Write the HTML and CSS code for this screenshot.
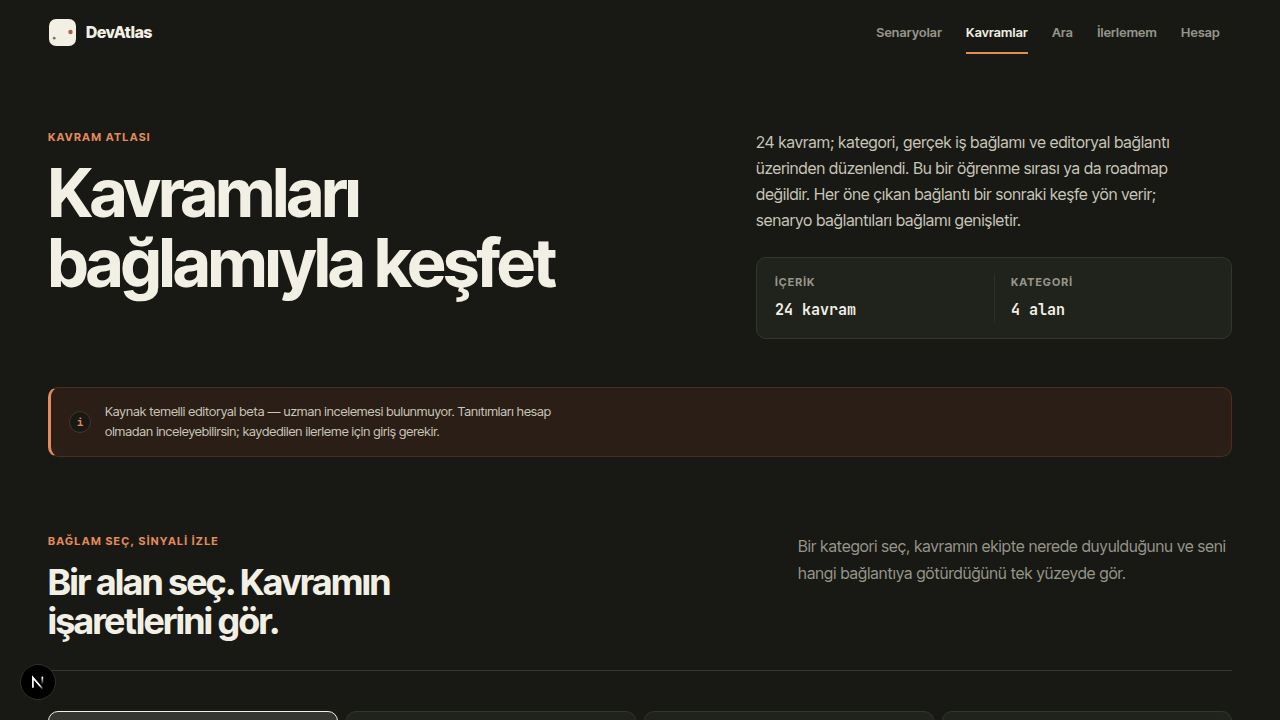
FILE: index.html
```html
<!DOCTYPE html>
<html lang="tr">
<head>
  <meta charset="utf-8">
  <meta name="viewport" content="width=device-width, initial-scale=1">
  <title>DevAtlas</title>
  <link rel="stylesheet" href="styles.css">
</head>
<body>
  <header class="site-header">
    <a class="brand" href="#">
      <svg class="brand-mark" viewBox="0 0 28 28" aria-hidden="true">
        <rect x="1" y="1" width="27" height="27" rx="7" fill="#f2efe4"/>
        <circle cx="22.5" cy="14" r="2.2" fill="#a9613f"/>
        <circle cx="6.2" cy="20.2" r="1.4" fill="#77776c"/>
      </svg>
      <span>DevAtlas</span>
    </a>
    <nav class="main-nav">
      <a href="#">Senaryolar</a>
      <a href="#" class="active" aria-current="page">Kavramlar</a>
      <a href="#">Ara</a>
      <a href="#">İlerlemem</a>
      <a href="#">Hesap</a>
    </nav>
  </header>

  <main class="page">
    <section class="hero">
      <div>
        <p class="eyebrow">KAVRAM ATLASI</p>
        <h1>Kavramları bağlamıyla keşfet</h1>
      </div>
      <div class="hero-side">
        <p class="lead">24 kavram; kategori, gerçek iş bağlamı ve editoryal bağlantı üzerinden düzenlendi. Bu bir öğrenme sırası ya da roadmap değildir. Her öne çıkan bağlantı bir sonraki keşfe yön verir; senaryo bağlantıları bağlamı genişletir.</p>
        <dl class="stats">
          <div class="stat">
            <dt>İÇERİK</dt>
            <dd>24 kavram</dd>
          </div>
          <div class="stat">
            <dt>KATEGORİ</dt>
            <dd>4 alan</dd>
          </div>
        </dl>
      </div>
    </section>

    <aside class="notice">
      <span class="notice-icon">i</span>
      <p>Kaynak temelli editoryal beta — uzman incelemesi bulunmuyor. Tanıtımları hesap olmadan inceleyebilirsin; kaydedilen ilerleme için giriş gerekir.</p>
    </aside>

    <section class="explorer">
      <div class="explorer-head">
        <div>
          <p class="eyebrow">BAĞLAM SEÇ, SİNYALİ İZLE</p>
          <h2>Bir alan seç. Kavramın işaretlerini gör.</h2>
        </div>
        <p class="explorer-intro">Bir kategori seç, kavramın ekipte nerede duyulduğunu ve seni hangi bağlantıya götürdüğünü tek yüzeyde gör.</p>
      </div>
      <div class="tabs">
        <button type="button" class="tab selected"></button>
        <button type="button" class="tab"></button>
        <button type="button" class="tab"></button>
        <button type="button" class="tab"></button>
      </div>
    </section>
  </main>

  <!-- Floating dev tools button -->
  <button type="button" class="dev-button">
    <svg viewBox="0 0 36 36" aria-hidden="true">
      <defs>
        <linearGradient id="diagonal" gradientUnits="userSpaceOnUse" x1="18" y1="18" x2="24" y2="25">
          <stop offset="0.4" stop-color="#fff"/>
          <stop offset="1" stop-color="#fff" stop-opacity="0.1"/>
        </linearGradient>
        <linearGradient id="stem" gradientUnits="userSpaceOnUse" x1="0" y1="12" x2="0" y2="22">
          <stop offset="0.1" stop-color="#fff"/>
          <stop offset="0.9" stop-color="#fff" stop-opacity="0"/>
        </linearGradient>
      </defs>
      <path d="M12.6 24V13.4L22.8 25.2" fill="none" stroke="url(#diagonal)" stroke-width="1.8"/>
      <path d="M22.6 12.3V21.3" fill="none" stroke="url(#stem)" stroke-width="1.8"/>
    </svg>
  </button>
</body>
</html>
```
FILE: styles.css
```css
:root {
  --bg: #181914;
  --surface: #20221c;
  --line: #33362f;
  --text: #f2efe4;
  --soft: #c9c6b9;
  --muted: #97958a;
  --accent: #e58a5b;
  --mono: "JetBrains Mono", "Liberation Mono", monospace;
}
* {
  box-sizing: border-box;
}
body {
  margin: 0;
  background: var(--bg);
  color: var(--text);
  font-family: "Inter Tight", Inter, "Liberation Sans", sans-serif;
  font-size: 16px;
}
h1, h2, p, dl, dd {
  margin: 0;
}

/* Header */
.site-header {
  display: flex;
  align-items: center;
  justify-content: space-between;
  height: 64px;
  padding: 0 60px 0 48px;
}
.brand {
  display: flex;
  align-items: center;
  gap: 10px;
  color: var(--text);
  font-weight: 800;
  letter-spacing: -0.01em;
  text-decoration: none;
}
.brand-mark {
  width: 28px;
  height: 28px;
}
.main-nav {
  display: flex;
  gap: 24px;
}
.main-nav a {
  padding: 12px 0 10px;
  border-bottom: 2px solid transparent;
  color: var(--muted);
  font-size: 13px;
  font-weight: 600;
  letter-spacing: 0.02em;
  line-height: 20px;
  text-decoration: none;
}
.main-nav a.active {
  border-color: var(--accent);
  color: var(--text);
}

/* Hero */
.page {
  padding: 65px 48px 48px;
}
.hero {
  display: grid;
  grid-template-columns: 644fr 476fr;
  gap: 64px;
}
.eyebrow {
  color: var(--accent);
  font-size: 11px;
  font-weight: 700;
  letter-spacing: 0.12em;
  line-height: 16px;
}
h1 {
  max-width: 600px;
  margin-top: 13px;
  font-size: 67px;
  font-weight: 700;
  letter-spacing: -0.03em;
  line-height: 70px;
}
.lead {
  max-width: 432px;
  color: var(--soft);
  letter-spacing: 0.01em;
  line-height: 26px;
}
.stats {
  display: grid;
  grid-template-columns: 1fr 1fr;
  margin-top: 24px;
  padding: 16px 0;
  border: 1px solid var(--line);
  border-radius: 10px;
  background: var(--surface);
}
.stat {
  padding: 0 18px;
}
.stat + .stat {
  padding-left: 16px;
  border-left: 1px solid #2b2e27;
}
.stat dt {
  color: var(--muted);
  font-size: 11px;
  font-weight: 700;
  letter-spacing: 0.1em;
  line-height: 16px;
}
.stat dd {
  margin-top: 8px;
  font-family: var(--mono);
  font-size: 15px;
  font-weight: 600;
  line-height: 24px;
}

/* Notice */
.notice {
  display: flex;
  align-items: center;
  gap: 14px;
  margin-top: 48px;
  padding: 13px 18px;
  border: 1px solid #4a2e20;
  border-left: 3px solid var(--accent);
  border-radius: 10px;
  background: #2b1e16;
}
.notice-icon {
  display: grid;
  flex: none;
  place-items: center;
  width: 22px;
  height: 22px;
  border: 1px solid #4a3528;
  border-radius: 50%;
  background: var(--bg);
  color: var(--accent);
  font-family: var(--mono);
  font-size: 11px;
  font-weight: 600;
}
.notice p {
  max-width: 480px;
  padding-bottom: 2px;
  color: var(--soft);
  font-size: 13px;
  line-height: 20px;
}

/* Explorer */
.explorer {
  margin-top: 76px;
}
.explorer-head {
  display: grid;
  grid-template-columns: 1fr 434px;
  gap: 48px;
  padding-bottom: 29px;
  border-bottom: 1px solid var(--line);
}
h2 {
  max-width: 400px;
  margin-top: 14px;
  font-size: 36px;
  font-weight: 700;
  letter-spacing: -0.025em;
  line-height: 39px;
}
.explorer-intro {
  color: var(--muted);
  letter-spacing: 0.01em;
  line-height: 27px;
}
.tabs {
  display: grid;
  grid-template-columns: repeat(4, 1fr);
  gap: 8px;
  margin-top: 40px;
}
.tab {
  min-height: 64px;
  border: 1px solid var(--line);
  border-radius: 10px;
  background: var(--surface);
}
.tab.selected {
  border-color: var(--text);
  background: #343730;
}

.dev-button {
  position: fixed;
  bottom: 20px;
  left: 20px;
  width: 36px;
  height: 36px;
  padding: 0;
  border: 1px solid #30312d;
  border-radius: 50%;
  background: #000;
}
.dev-button svg {
  display: block;
}
```
